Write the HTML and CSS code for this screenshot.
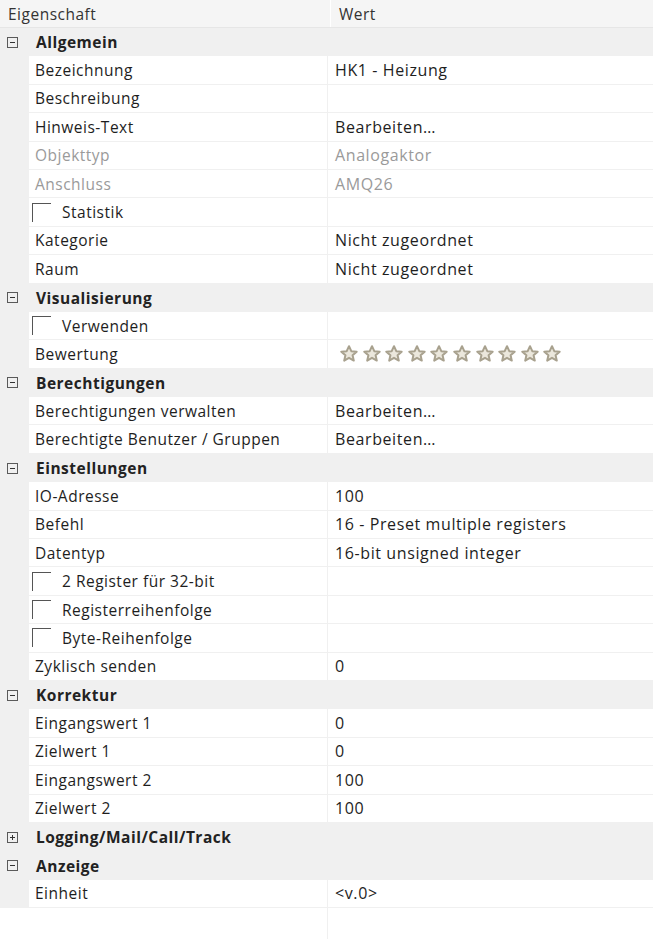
FILE: index.html
```html
<!DOCTYPE html>
<html lang="de">
<head>
  <meta charset="UTF-8" />
  <title>Eigenschaften</title>
  <link rel="stylesheet" href="styles.css">
</head>
<body>
  <div id="eigenschaften">
    <!-- Kopfzeile -->
    <div class="kopf">
      <div class="kname">Eigenschaft</div>
      <div class="kwert">Wert</div>
    </div>

    <!-- Allgemein -->
    <div class="gruppe"><span class="knopf"></span>Allgemein</div>
    <div class="zeile"><div class="name">Bezeichnung</div><div class="wert">HK1 - Heizung</div></div>
    <div class="zeile"><div class="name">Beschreibung</div><div class="wert"></div></div>
    <div class="zeile"><div class="name">Hinweis-Text</div><div class="wert">Bearbeiten…</div></div>
    <div class="zeile aus"><div class="name">Objekttyp</div><div class="wert">Analogaktor</div></div>
    <div class="zeile aus"><div class="name">Anschluss</div><div class="wert">AMQ26</div></div>
    <div class="zeile"><div class="name"><span class="haken"></span>Statistik</div><div class="wert"></div></div>
    <div class="zeile"><div class="name">Kategorie</div><div class="wert">Nicht zugeordnet</div></div>
    <div class="zeile"><div class="name">Raum</div><div class="wert">Nicht zugeordnet</div></div>

    <!-- Visualisierung -->
    <div class="gruppe"><span class="knopf"></span>Visualisierung</div>
    <div class="zeile"><div class="name"><span class="haken"></span>Verwenden</div><div class="wert"></div></div>
    <div class="zeile"><div class="name">Bewertung</div><div class="wert sterne" id="sterne"></div></div>

    <!-- Berechtigungen -->
    <div class="gruppe"><span class="knopf"></span>Berechtigungen</div>
    <div class="zeile"><div class="name">Berechtigungen verwalten</div><div class="wert">Bearbeiten…</div></div>
    <div class="zeile"><div class="name">Berechtigte Benutzer / Gruppen</div><div class="wert">Bearbeiten…</div></div>

    <!-- Einstellungen -->
    <div class="gruppe"><span class="knopf"></span>Einstellungen</div>
    <div class="zeile"><div class="name">IO-Adresse</div><div class="wert">100</div></div>
    <div class="zeile"><div class="name">Befehl</div><div class="wert">16 - Preset multiple registers</div></div>
    <div class="zeile"><div class="name">Datentyp</div><div class="wert">16-bit unsigned integer</div></div>
    <div class="zeile"><div class="name"><span class="haken"></span>2 Register für 32-bit</div><div class="wert"></div></div>
    <div class="zeile"><div class="name"><span class="haken"></span>Registerreihenfolge</div><div class="wert"></div></div>
    <div class="zeile"><div class="name"><span class="haken"></span>Byte-Reihenfolge</div><div class="wert"></div></div>
    <div class="zeile"><div class="name">Zyklisch senden</div><div class="wert">0</div></div>

    <!-- Korrektur -->
    <div class="gruppe"><span class="knopf"></span>Korrektur</div>
    <div class="zeile"><div class="name">Eingangswert 1</div><div class="wert">0</div></div>
    <div class="zeile"><div class="name">Zielwert 1</div><div class="wert">0</div></div>
    <div class="zeile"><div class="name">Eingangswert 2</div><div class="wert">100</div></div>
    <div class="zeile"><div class="name">Zielwert 2</div><div class="wert">100</div></div>

    <div class="gruppe"><span class="knopf zu"></span>Logging/Mail/Call/Track</div>

    <!-- Anzeige -->
    <div class="gruppe"><span class="knopf"></span>Anzeige</div>
    <div class="zeile"><div class="name">Einheit</div><div class="wert">&lt;v.0&gt;</div></div>

    <div class="rest"><div class="name"></div><div class="wert"></div></div>
  </div>

  <script>
    // Bewertung: 10 leere Sterne
    const stern = '<svg width="18" height="17" viewBox="0 0 18 17"><path d="M9 1.2l2.3 5 5.4.5-4.1 3.6 1.2 5.3L9 12.8l-4.8 2.8 1.2-5.3L1.3 6.7l5.4-.5z" fill="#ebe7dc" stroke="#a8a18e" stroke-width="2" stroke-linejoin="round"/></svg>';
    document.getElementById("sterne").innerHTML = stern.repeat(10);
  </script>
</body>
</html>
```

FILE: styles.css
```css
html, body {
  margin: 0;
  padding: 0;
  font-family: 'Open Sans', sans-serif;
  font-size: 15.5px;
  letter-spacing: 0.5px;
  color: #1e1e1e;
  background: #ffffff;
}

#eigenschaften {
  display: flex;
  flex-direction: column;
  height: 939px;
}

.kopf {
  display: flex;
  height: 28px;
  box-sizing: border-box;
  background: #f5f5f5;
  border-bottom: 1px solid #e6e6e6;
  color: #333;
}

.kname, .kwert {
  display: flex;
  align-items: center;
}

.kname {
  width: 331px;
  padding-left: 8px;
  box-sizing: border-box;
  border-right: 1px solid #ffffff;
}

.kwert {
  padding-left: 8px;
}

.gruppe {
  display: flex;
  align-items: center;
  height: 28.4px;
  padding-left: 7px;
  box-sizing: border-box;
  background: #f0f0f0;
  font-weight: bold;
  color: #222;
}

.knopf {
  position: relative;
  width: 9px;
  height: 9px;
  border: 1px solid #5a5a5a;
  margin-right: 18px;
}

.knopf::before {
  content: "";
  position: absolute;
  left: 2px;
  right: 2px;
  top: 4px;
  height: 1px;
  background: #333;
}

.knopf.zu::after {
  content: "";
  position: absolute;
  top: 2px;
  bottom: 2px;
  left: 4px;
  width: 1px;
  background: #333;
}

.zeile, .rest {
  display: flex;
  height: 28.4px;
  padding-left: 29px;
  box-sizing: border-box;
  background: #f0f0f0;
}

.zeile .name, .zeile .wert {
  display: flex;
  align-items: center;
  white-space: nowrap;
  background: #ffffff;
  border-bottom: 1px solid #f0f0f0;
}

.name {
  width: 299px;
  padding-left: 6px;
  box-sizing: border-box;
  border-right: 1px solid #f0f0f0;
}

.wert {
  flex: 1;
  padding-left: 7px;
  font-size: 16px;
  letter-spacing: 0.6px;
}

.aus {
  color: #9a9a9a;
}

.haken {
  flex: none;
  width: 19px;
  height: 19px;
  box-sizing: border-box;
  border-top: 1px solid #555;
  border-left: 1px solid #555;
  margin: 0 11px 0 -3px;
}

.sterne {
  gap: 4.6px;
  padding-left: 12px;
}

.sterne svg {
  display: block;
}

.rest {
  flex: 1;
  background: #ffffff;
}
```
